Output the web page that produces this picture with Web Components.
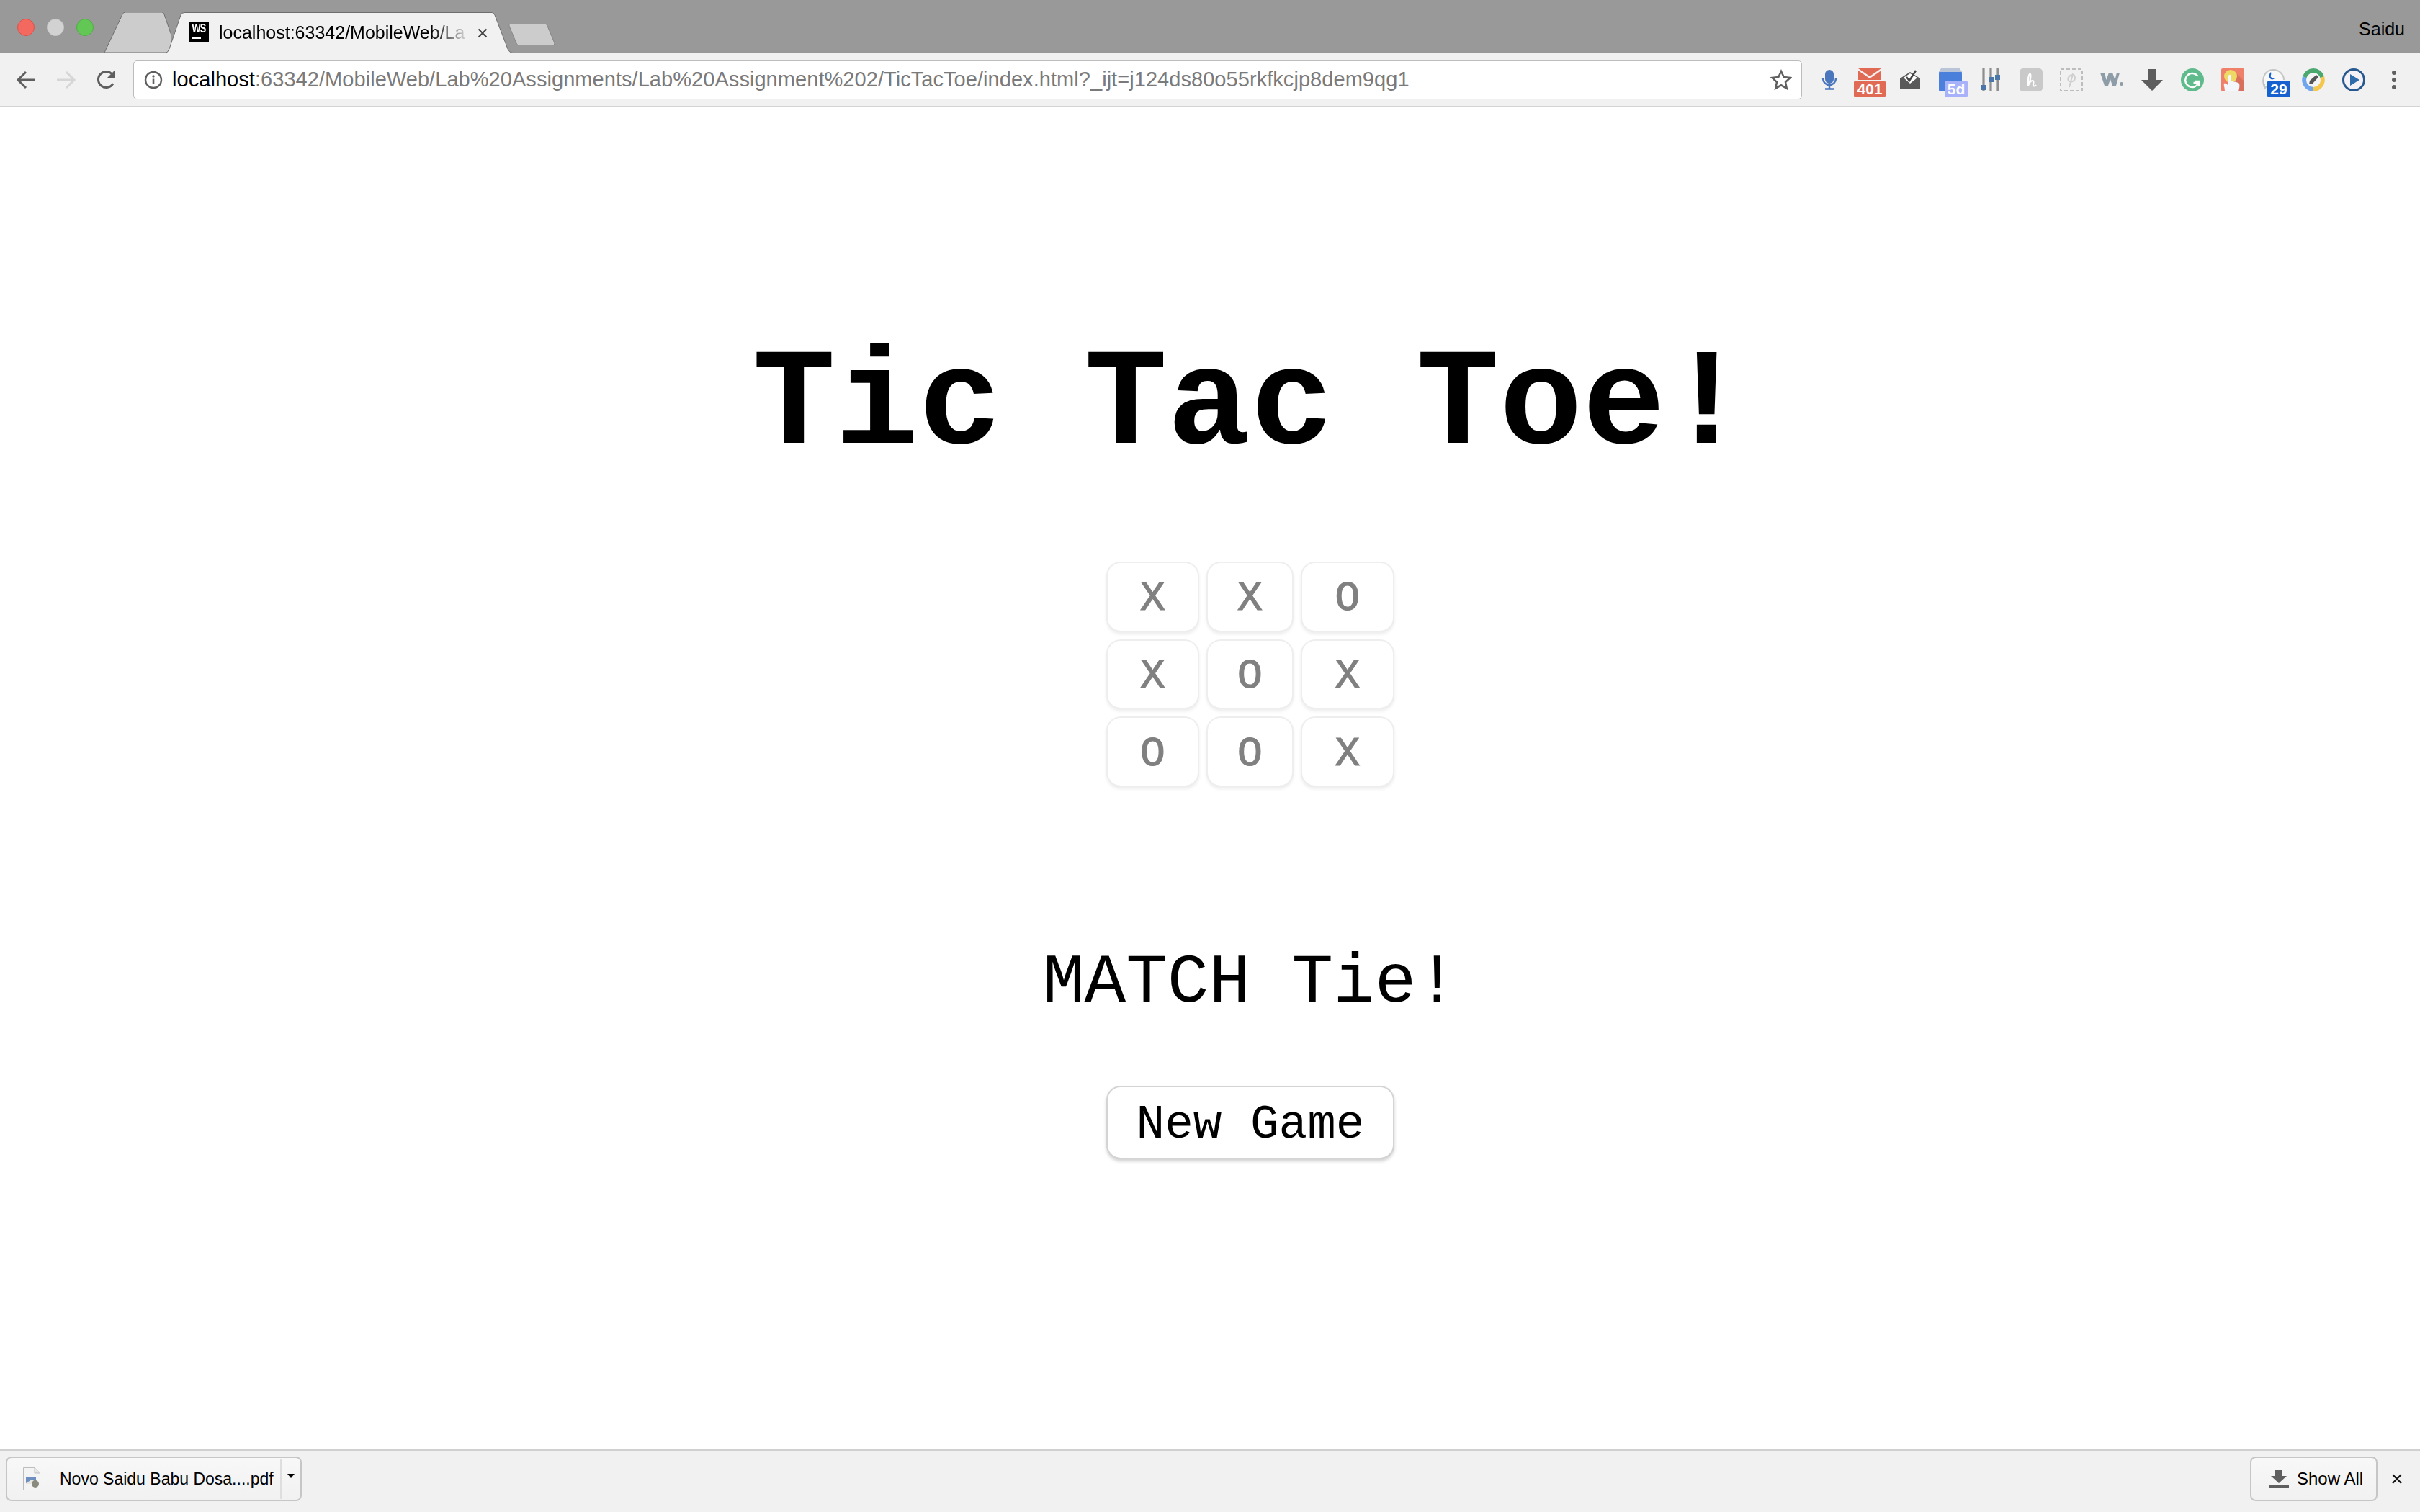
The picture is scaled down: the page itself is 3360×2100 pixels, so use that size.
<!DOCTYPE html>
<html>
<head>
<meta charset="utf-8">
<title>Tic Tac Toe</title>
<style>
  html,body{margin:0;height:100%;background:#fff;}
  body{display:flex;flex-direction:column;height:2100px;overflow:hidden;font-family:"Liberation Sans",Arial,sans-serif;}
</style>
</head>
<body>
<browser-titlebar user="Saidu"></browser-titlebar>
<browser-toolbar></browser-toolbar>
<game-page></game-page>
<download-shelf></download-shelf>

<script>
//barra de titulo con semaforos y pestañas
class browserTitlebar extends HTMLElement{
    constructor(){
        super()
        this.attachShadow({mode:"open"})
    }
    connectedCallback(){
        this.shadowRoot.innerHTML=`<style>
        :host{display:flex;align-items:flex-end;height:73px;background:#999;border-bottom:1px solid #6e6e6e;flex:none;position:relative;}
        .lights{display:flex;gap:17px;align-self:flex-start;padding:26px 15px 0 24px;}
        .lights i{display:block;width:24px;height:24px;border-radius:50%;box-sizing:border-box;}
        .r{background:#f4695f;border:1px solid #d9534b;}
        .g{background:#d2d2d2;border:1px solid #c4c4c4;}
        .v{background:#62c755;border:1px solid #4fae43;}
        .old{width:93px;height:56px;display:block;flex:none;}
        .tab{width:482px;height:57px;margin-left:-8px;margin-bottom:-1px;position:relative;flex:none;display:flex;align-items:center;padding-left:32px;box-sizing:border-box;}
        .tab svg.bg{position:absolute;left:0;top:0;}
        .fav{position:relative;width:28px;height:28px;background:#000;color:#fff;font:bold 16px/15px "Liberation Sans",sans-serif;text-align:center;letter-spacing:-1px;margin-top:-1px;overflow:hidden;}
        .fav b{display:block;position:absolute;left:5px;bottom:5px;width:12px;height:2px;background:#fff;}
        .fav span{display:block;transform:scaleX(.8);margin-top:1px;}
        .txt{position:relative;margin-left:14px;width:350px;overflow:hidden;white-space:nowrap;font-size:25px;color:#000;-webkit-mask-image:linear-gradient(to right,#000 84%,transparent 100%);mask-image:linear-gradient(to right,#000 84%,transparent 100%);}
        .x{position:relative;margin-left:9px;width:14px;height:14px;display:block;}
        .new{width:64px;height:30px;margin-left:-6px;margin-bottom:10px;flex:none;display:block;}
        .user{margin-left:auto;align-self:flex-start;padding:26px 21px 0 0;font-size:25px;line-height:28px;color:#000;}
        </style>
        <div class="lights"><i class="r"></i><i class="g"></i><i class="v"></i></div>
        <svg class="old" viewBox="0 0 93 56"><path d="M0 56 L25 3 Q26 0 29 0 H80 Q82 0 83 3 L93 32 V56Z" fill="#ccc" stroke="#6e6e6e" stroke-width="1"/></svg>
        <div class="tab">
          <svg class="bg" width="482" height="57" viewBox="0 0 482 57"><path d="M0 56.5 Q3 56 5 51 L21 4 Q22 .5 26 .5 H453 Q456 .5 457 4 L475 51 Q477 56 482 56.5Z" fill="#f1f1f1" stroke="#6e6e6e" stroke-width="1"/><path d="M1 57H481" stroke="#f1f1f1" stroke-width="2"/></svg>
          <div class="fav"><span>WS</span><b></b></div>
          <div class="txt">localhost:63342/MobileWeb/La</div>
          <svg class="x" viewBox="0 0 14 14"><path d="M1.5 1.5L12.5 12.5M12.5 1.5L1.5 12.5" stroke="#444" stroke-width="2"/></svg>
        </div>
        <svg class="new" viewBox="0 0 64 30"><path d="M3 0 H50 Q53 0 54 3 L64 27 Q64 30 61 30 H15 Q12 30 11 27 L1 3 Q0 0 3 0Z" fill="#ccc" stroke="#868686" stroke-width="1"/></svg>
        <div class="user">${this.getAttribute("user")}</div>`
    }
}
customElements.define("browser-titlebar",browserTitlebar)

//iconos de extensiones, cada uno en una caja de 32px
const extIcons={
    mic:`<svg viewBox="0 0 32 32"><rect x="10" y="2" width="12" height="19" rx="6" fill="#4a76bd"/><path d="M7 14a9 9 0 0 0 18 0" fill="none" stroke="#4a76bd" stroke-width="2.5"/><path d="M16 23v5M10 28.500h12" stroke="#4a76bd" stroke-width="2.500"/></svg>`,
    mail:`<svg viewBox="0 0 32 32"><path d="M0 3h32v13H0z" fill="#e16a55"/><path d="M0 3h32L16 14z" fill="#f1f1f1"/><path d="M0 0h32L16 11z" fill="#e16a55"/></svg>`,
    check:`<svg viewBox="0 0 32 32"><path d="M2 14L16 5l14 9v15H2z" fill="#5a5a5a"/><path d="M7 13l9-6 10 6-10 8z" fill="#fff"/><path d="M11 12l4 5 9-14" fill="none" stroke="#444" stroke-width="2.500"/></svg>`,
    cal:`<svg viewBox="0 0 32 32"><rect x="0" y="4" width="32" height="28" rx="2" fill="#4a7fdc"/><path d="M3 0h26l3 5H0z" fill="#b9c4d8"/></svg>`,
    sliders:`<svg viewBox="0 0 26 32"><path d="M3 0v32M13 0v32M23 0v32" stroke="#8e8e8e" stroke-width="3.200"/><rect y="23" width="7" height="7" fill="#4a76a8"/><rect x="10" y="12" width="7" height="7" fill="#4a76a8"/><rect x="19" y="9" width="7" height="7" fill="#4a76a8"/></svg>`,
    h:`<svg viewBox="0 0 32 32"><rect width="32" height="32" rx="5" fill="#c9c9c9"/><path d="M12 24c3-6 4-14 3-16-2-2-4 8-3 16 1-4 4-7 6-7 3 0 0 6 1 7 1 1 3 0 4-1" fill="none" stroke="#fff" stroke-width="2.200"/></svg>`,
    p:`<svg viewBox="0 0 32 32"><rect x="1" y="1" width="30" height="30" fill="none" stroke="#bdbdbd" stroke-width="2" stroke-dasharray="5 3"/><path d="M13 26c2-6 3-12 5-17-5 0-8 5-6 8 3 3 9 1 9-4 0-3-2-5-4-5" fill="none" stroke="#cfcfcf" stroke-width="2"/></svg>`,
    w:`<svg viewBox="0 0 32 32"><path d="M0 6h6l2.500 10L12 6h5l3.500 10L23 6h4l-5 18h-5l-3-9-3 9H6z" fill="#8d9ca6"/><circle cx="29.500" cy="21.500" r="2.500" fill="#8d9ca6"/></svg>`,
    down:`<svg viewBox="0 0 32 32"><path d="M10 1h12v15h9L16 31 1 16h9z" fill="#5d5d5d"/></svg>`,
    gram:`<svg viewBox="0 0 32 32"><circle cx="16" cy="16" r="16" fill="#5fbb8b"/><path d="M23.500 11A9.500 9.500 0 1 0 24.500 20H17.500" fill="none" stroke="#fff" stroke-width="2.400"/><path d="M25 24v-6h-6" fill="none" stroke="#fff" stroke-width="2.400"/></svg>`,
    hand:`<svg viewBox="0 0 32 32"><rect width="32" height="32" rx="2" fill="#ef8069"/><path d="M32 32H14L9 20 22 8l10 10z" fill="#d9705c"/><circle cx="13" cy="11" r="9" fill="#eed964"/><path d="M5 32c0-6-2-9-1-11 2-1 4 1 6 3V11c0-3 4-3 4 0v7c3 0 9 1 11 3 1 3 0 7-1 11z" fill="#f3f7fb"/></svg>`,
    chat:`<svg viewBox="0 0 32 32"><path d="M4 26C-1 14 5 2 16 2c10 0 15 8 15 14" fill="#f8f8f8" stroke="#c5c5c5" stroke-width="2"/><path d="M4 21v7l3-3" fill="none" stroke="#c5c5c5" stroke-width="2"/><path d="M13 5c-3 3-3 8 0 10 2 1 4 0 5-1-2-1-3 0-5-2-1-2 1-3 0-7z" fill="#1660cf"/></svg>`,
    pencil:`<svg viewBox="0 0 32 32"><path d="M16 0a16 16 0 0 1 15 11l-7 3a8 8 0 0 0-16 0L1 11A16 16 0 0 1 16 0z" fill="#4aa86f"/><path d="M1 11a16 16 0 0 0 15 21v-8a8 8 0 0 1-8-10z" fill="#6fa5ee"/><path d="M31 11a16 16 0 0 1-15 21v-8a8 8 0 0 0 8-10z" fill="#f4c64c"/><circle cx="16" cy="16" r="10" fill="#f4f4f4"/><path d="M10 22l1-5 9-8 3 3-8 9z" fill="#555"/></svg>`,
    play:`<svg viewBox="0 0 32 32"><circle cx="16" cy="16" r="14.500" fill="#f4f1f6" stroke="#27588e" stroke-width="3"/><path d="M11 8l13 8-13 8z" fill="#2f6ba8"/></svg>`,
    dots:`<svg viewBox="0 0 32 32"><circle cx="16" cy="6" r="3" fill="#5f5f5f"/><circle cx="16" cy="16" r="3" fill="#5f5f5f"/><circle cx="16" cy="26" r="3" fill="#5f5f5f"/></svg>`
}

//un icono de extension con su contador opcional
class extIcon extends HTMLElement{
    constructor(){
        super()
        this.attachShadow({mode:"open"})
    }
    connectedCallback(){
        let badge=this.getAttribute("badge")
        let color=this.getAttribute("color")
        let left=this.getAttribute("left")||"8"
        let wide=this.getAttribute("wide")||"32"
        this.shadowRoot.innerHTML=`<style>
        :host{display:block;width:32px;height:32px;position:relative;flex:none;}
        svg{display:block;width:32px;height:32px;}
        .badge{position:absolute;top:18px;height:22px;border-radius:1px;color:#fff;font:bold 21px/22px "Liberation Sans",sans-serif;text-align:center;}
        </style>
        ${extIcons[this.getAttribute("name")]}
        ${badge?`<div class="badge" style="left:${left}px;width:${wide}px;background:${color}">${badge}</div>`:""}`
    }
}
customElements.define("ext-icon",extIcon)

class browserToolbar extends HTMLElement{
    constructor(){
        super()
        this.attachShadow({mode:"open"})
    }
    connectedCallback(){
        this.shadowRoot.innerHTML=`<style>
        :host{display:flex;align-items:center;height:73px;background:#f1f1f1;border-bottom:1px solid #d3d3d3;flex:none;}
        svg.nav{display:block;width:28px;height:28px;flex:none;}
        .navs{display:flex;gap:28px;padding-left:22px;width:185px;box-sizing:border-box;flex:none;}
        .omni{width:2317px;height:54px;box-sizing:border-box;background:#fff;border:1px solid #bcbcbc;border-radius:5px;display:flex;align-items:center;flex:none;padding-left:14px;position:relative;}
        .omni svg.info{width:26px;height:26px;flex:none;display:block;}
        .url{margin-left:13px;font-size:29px;letter-spacing:.054px;color:#7a7a7a;white-space:nowrap;}
        .url b{font-weight:normal;color:#000;}
        .star{position:absolute;right:13px;top:11px;width:30px;height:30px;display:block;}
        .exts{display:flex;gap:24px;margin-left:22px;margin-top:0;}
        </style>
        <div class="navs">
          <svg class="nav" viewBox="0 0 28 28"><path d="M27 14H3M14 3L3 14l11 11" fill="none" stroke="#5f5f5f" stroke-width="3"/></svg>
          <svg class="nav" viewBox="0 0 28 28"><path d="M1 14h24M14 3l11 11-11 11" fill="none" stroke="#d6d6d6" stroke-width="3"/></svg>
          <svg class="nav" viewBox="0 0 28 28"><path d="M23 19A11 11 0 1 1 22 6.500" fill="none" stroke="#5f5f5f" stroke-width="3"/><path d="M25 1v11H14z" fill="#5f5f5f"/></svg>
        </div>
        <div class="omni">
          <svg class="info" viewBox="0 0 26 26"><circle cx="13" cy="13" r="11" fill="none" stroke="#5f5f5f" stroke-width="2.400"/><path d="M13 11.500v7" stroke="#5f5f5f" stroke-width="2.600"/><circle cx="13" cy="8" r="1.700" fill="#5f5f5f"/></svg>
          <div class="url"><b>localhost</b>:63342/MobileWeb/Lab%20Assignments/Lab%20Assignment%202/TicTacToe/index.html?_ijt=j124ds80o55rkfkcjp8dem9qg1</div>
          <svg class="star" viewBox="0 0 30 30"><path d="M15 3l3.700 8 8.800 1-6.500 6 1.800 8.700L15 22.300 7.200 26.700 9 18l-6.500-6 8.800-1z" fill="none" stroke="#5f5f5f" stroke-width="2.500"/></svg>
        </div>
        <div class="exts">
          <ext-icon name="mic"></ext-icon>
          <ext-icon name="mail" badge="401" color="#e16a55" left="-6" wide="44"></ext-icon>
          <ext-icon name="check"></ext-icon>
          <ext-icon name="cal" badge="5d" color="#a8b2fb"></ext-icon>
          <ext-icon name="sliders"></ext-icon>
          <ext-icon name="h"></ext-icon>
          <ext-icon name="p"></ext-icon>
          <ext-icon name="w"></ext-icon>
          <ext-icon name="down"></ext-icon>
          <ext-icon name="gram"></ext-icon>
          <ext-icon name="hand"></ext-icon>
          <ext-icon name="chat" badge="29" color="#1660cf"></ext-icon>
          <ext-icon name="pencil"></ext-icon>
          <ext-icon name="play"></ext-icon>
          <ext-icon name="dots"></ext-icon>
        </div>`
    }
}
customElements.define("browser-toolbar",browserToolbar)

//casilla del tablero
class gameCell extends HTMLElement{
    constructor(){
        super()
        this.attachShadow({mode:"open"})
        this.shadowRoot.innerHTML=`<style>
        :host{display:flex;align-items:center;justify-content:center;box-sizing:border-box;padding-top:7px;background:#fff;border-radius:20px;color:#808080;font:58px/1 "Liberation Mono",monospace;-webkit-text-stroke:1.2px #808080;
          box-shadow:inset 0 0 0 2px #eee,inset 0 -2px 0 #e4e4e4,0 3px 4px rgba(0,0,0,.07);}
        </style><slot></slot>`
    }
}
customElements.define("game-cell",gameCell)

class gameBoard extends HTMLElement{
    constructor(){
        super()
        this.attachShadow({mode:"open"})
        this.shadowRoot.innerHTML=`<style>
        :host{display:grid;grid-template-columns:129px 121px 130px;grid-auto-rows:97.67px;gap:10px;width:400px;}
        </style><slot></slot>`
    }
}
customElements.define("game-board",gameBoard)

class gamePage extends HTMLElement{
    constructor(){
        super()
        this.attachShadow({mode:"open"})
    }
    connectedCallback(){
        let marks=["X","X","O","X","O","X","O","O","X"]
        this.shadowRoot.innerHTML=`<style>
        :host{display:flex;flex-direction:column;align-items:center;flex:1;padding:316px 0 0 112px;font-family:"Liberation Mono",monospace;color:#000;min-height:0;}
        h1{margin:0;font-size:192px;line-height:200px;font-weight:bold;white-space:nowrap;}
        game-board{margin-top:116px;}
        p{margin:218px 0 0;font-size:96px;line-height:110px;white-space:nowrap;}
        button{margin-top:87px;width:400px;height:102px;box-sizing:border-box;background:#fff;border:0;border-radius:20px;font:66px/1 "Liberation Mono",monospace;color:#000;padding:9px 0 0;
          box-shadow:inset 0 0 0 2px #d4d4d4,inset 0 -2px 0 #bdbdbd,0 3px 4px rgba(0,0,0,.18);}
        </style>
        <h1>Tic Tac Toe!</h1>
        <game-board>${marks.map(m=>`<game-cell>${m}</game-cell>`).join("")}</game-board>
        <p>MATCH Tie!</p>
        <button>New Game</button>`
    }
}
customElements.define("game-page",gamePage)

//barra de descargas
class downloadShelf extends HTMLElement{
    constructor(){
        super()
        this.attachShadow({mode:"open"})
    }
    connectedCallback(){
        this.shadowRoot.innerHTML=`<style>
        :host{display:flex;align-items:center;justify-content:space-between;height:87px;box-sizing:border-box;background:#f1f1f1;border-top:2px solid #d0d0d0;flex:none;padding:0 25px 7px 8px;font-size:24px;color:#000;}
        .btn{height:62px;box-sizing:border-box;border:2px solid #c6c6c6;border-radius:8px;background:linear-gradient(#f8f8f8,#f1f1f1);display:flex;align-items:center;}
        .file{width:411px;}
        .file svg.doc{width:24px;height:32px;margin-left:22px;display:block;flex:none;}
        .name{margin-left:27px;width:306px;font-size:23px;white-space:nowrap;flex:none;}
        .div{width:2px;height:56px;background:#dedede;flex:none;}
        .caret{margin-left:8px;width:10px;height:6px;display:block;margin-top:-8px;flex:none;}
        .right{display:flex;align-items:center;gap:20px;}
        .all{width:177px;padding-left:24px;}
        .all svg{width:28px;height:26px;display:block;flex:none;}
        .all span{margin-left:11px;white-space:nowrap;}
        .close{width:14px;height:14px;display:block;}
        </style>
        <div class="btn file">
          <svg class="doc" viewBox="0 0 24 32"><path d="M.5.5H16L23.500 8V31.500H.5z" fill="#f4f4f4" stroke="#bdbdbd"/><path d="M16 .5V8h7.500" fill="#e6e6e6" stroke="#bdbdbd"/><rect x="4" y="13" width="14" height="9" fill="#6e8fc0"/><path d="M4 22l8-5 6 3v3H4z" fill="#e8e6e0"/><circle cx="17" cy="23" r="5" fill="#8a8a7e"/></svg>
          <div class="name">Novo Saidu Babu Dosa....pdf</div>
          <div class="div"></div>
          <svg class="caret" viewBox="0 0 10 6"><path d="M0 0h10L5 6z" fill="#000"/></svg>
        </div>
        <div class="right">
          <div class="btn all">
            <svg viewBox="0 0 28 26"><path d="M9 0h10v9h6L14 19 3 9h6z" fill="#5f5f5f"/><rect y="22" width="28" height="3" fill="#5f5f5f"/></svg>
            <span>Show All</span>
          </div>
          <svg class="close" viewBox="0 0 14 14"><path d="M1 1l12 12M13 1L1 13" stroke="#111" stroke-width="2.200"/></svg>
        </div>`
    }
}
customElements.define("download-shelf",downloadShelf)
</script>
</body>
</html>
